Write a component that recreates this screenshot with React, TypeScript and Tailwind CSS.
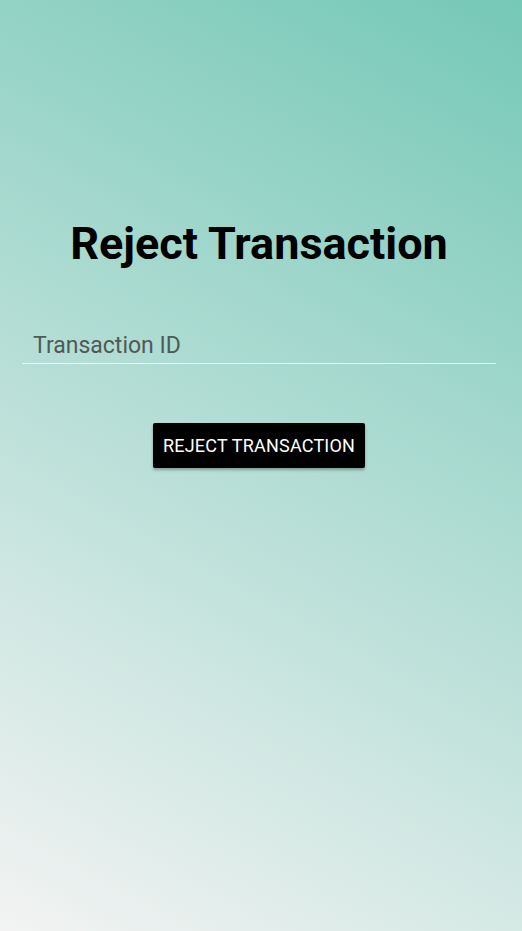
export default function App() {
  return (
    <main className="min-h-[931px] w-full pr-[4px] flex flex-col items-center bg-[linear-gradient(29deg,#f3f3f3,#75c8b7)] font-['Roboto',sans-serif]">
      <h1 className="mt-[216px] text-[45px] leading-[56px] font-bold text-black">Reject Transaction</h1>

      <div className="w-full px-[22px] mt-[50px]">
        <input
          type="text"
          placeholder="Transaction ID"
          className="w-full bg-transparent border-b-[1.5px] border-[#eef8f5] px-[11px] pt-[6px] pb-0 text-[23px] leading-[35px] text-black placeholder:text-[#4f5a58] outline-none"
        />
      </div>

      <button className="mt-[59px] h-[45px] px-[10px] bg-black text-white text-[18px] font-normal tracking-[0.2px] uppercase rounded-[2px] shadow-[0_2px_3px_rgba(0,0,0,0.3)]">
        Reject Transaction
      </button>
    </main>
  );
}
